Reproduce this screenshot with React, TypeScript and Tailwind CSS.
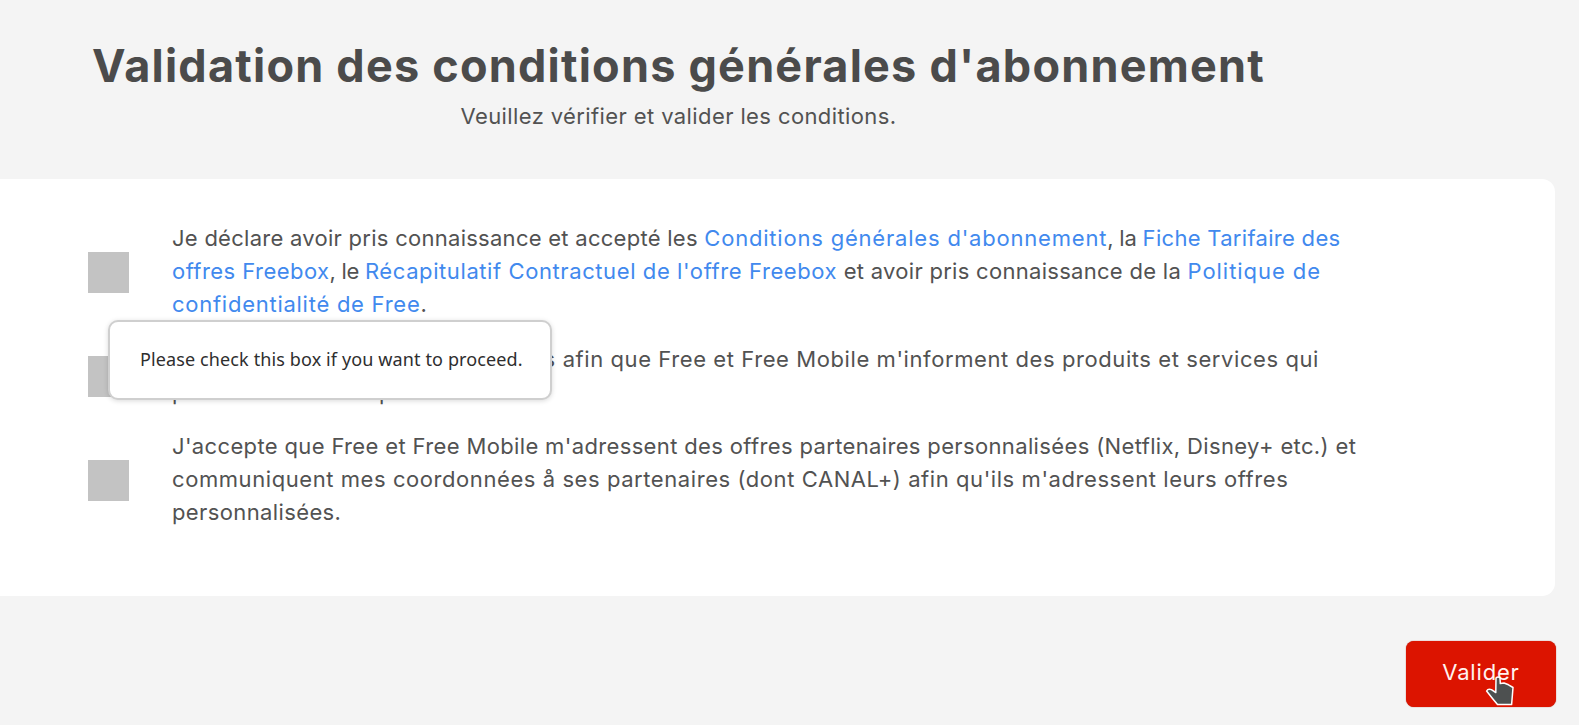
import type { ReactNode } from 'react';

interface ConditionProps {
  children: ReactNode;
}

function Condition({ children }: ConditionProps) {
  return (
    <div className="flex items-center">
      <div className="mt-[1px] mr-[43px] h-[41px] w-[41px] shrink-0 bg-[#c3c3c3]" />
      <div className="flex flex-col text-[22px] leading-[33px] whitespace-pre text-[#525252]">{children}</div>
    </div>
  );
}

function Tooltip() {
  return (
    <div className="absolute top-[320px] left-[108px] flex h-20 w-[444px] items-center rounded-[10px] border-2 border-[#cfcfcf] bg-white pb-[2px] pl-[30px] shadow-[0_1px_5px_rgba(0,0,0,0.15)]">
      <span className="font-['Noto_Sans',sans-serif] text-[18px] tracking-[0.12px] whitespace-nowrap text-[#2e2e2e]">
        Please check this box if you want to proceed.
      </span>
    </div>
  );
}

function HandPointer() {
  return (
    <svg className="absolute top-[34px] left-[79px] h-[32px] w-[31px]" viewBox="0 0 31 32">
      <path
        d="M11 3 Q13 1 15 3 L15.3 8.6 L19 8 L23.5 9.8 L28 12.5 L27.4 20 L26.6 29.6 L12.5 29.6 L7.5 23.5 L1.6 16 Q3 13.4 6.4 14.6 L10.8 17.5 Z"
        fill="#4d5050"
        stroke="#fff"
        strokeWidth="1.5"
        strokeLinejoin="round"
      />
    </svg>
  );
}

export default function App() {
  return (
    <div className="relative h-[725px] overflow-hidden bg-[#f4f4f4] font-['Inter',sans-serif]">
      {/* Heading */}
      <header className="flex h-[179px] w-[1357px] flex-col items-center pt-[38px] whitespace-nowrap text-[#4b4b4b]">
        <h1 className="text-[45px] leading-[56px] font-bold tracking-[1.22px]">
          Validation des conditions générales d'abonnement
        </h1>
        <p className="mt-[6px] text-[22px] leading-[33px] tracking-[0.395px] text-[#525252]">
          Veuillez vérifier et valider les conditions.
        </p>
      </header>

      {/* Conditions */}
      <main className="flex h-[417px] w-[1555px] flex-col gap-[21.5px] rounded-r-[13px] bg-white pt-[43px] pl-[88px]">
        <Condition>
          <div>
            <span className="tracking-[0.27px]">Je déclare avoir pris connaissance et accepté les </span>
            <a className="tracking-[0.8px] text-[#4189ee]">Conditions générales d'abonnement</a>
            <span className="tracking-[-0.2px]">, la </span>
            <a className="tracking-[0.3px] text-[#4189ee]">Fiche Tarifaire des</a>
          </div>
          <div>
            <a className="tracking-[0.45px] text-[#4189ee]">offres Freebox</a>
            <span className="tracking-[-0.3px]">, le </span>
            <a className="tracking-[0.59px] text-[#4189ee]">Récapitulatif Contractuel de l'offre Freebox</a>
            <span className="tracking-[0.29px]"> et avoir pris connaissance de la </span>
            <a className="tracking-[0.95px] text-[#4189ee]">Politique de</a>
          </div>
          <div>
            <a className="tracking-[0.74px] text-[#4189ee]">confidentialité de Free</a>.
          </div>
        </Condition>
        <Condition>
          <div>
            <span className="tracking-[0.66px]">J'accepte l'usage de mes données </span>
            <span className="tracking-[0.58px]">
              afin que Free et Free Mobile m'informent des produits et services qui
            </span>
          </div>
          <div className="tracking-[1.17px]">pourraient m'être présentés.</div>
        </Condition>
        <Condition>
          <div className="tracking-[0.355px]">
            J'accepte que Free et Free Mobile m'adressent des offres partenaires personnalisées (Netflix, Disney+ etc.) et
          </div>
          <div className="tracking-[0.57px]">
            communiquent mes coordonnées å ses partenaires (dont CANAL+) afin qu'ils m'adressent leurs offres
          </div>
          <div className="tracking-[0.38px]">personnalisées.</div>
        </Condition>
      </main>

      {/* Submit */}
      <footer className="flex justify-end pt-[45px] pr-[23px]">
        <button className="relative h-[66px] w-[150px] rounded-lg bg-[#dc1400] pb-[3px] text-[22px] tracking-[0.83px] text-[#fff3ef] shadow-[0_0_1px_#a01000]">
          Valider
          <HandPointer />
        </button>
      </footer>

      <Tooltip />
    </div>
  );
}
